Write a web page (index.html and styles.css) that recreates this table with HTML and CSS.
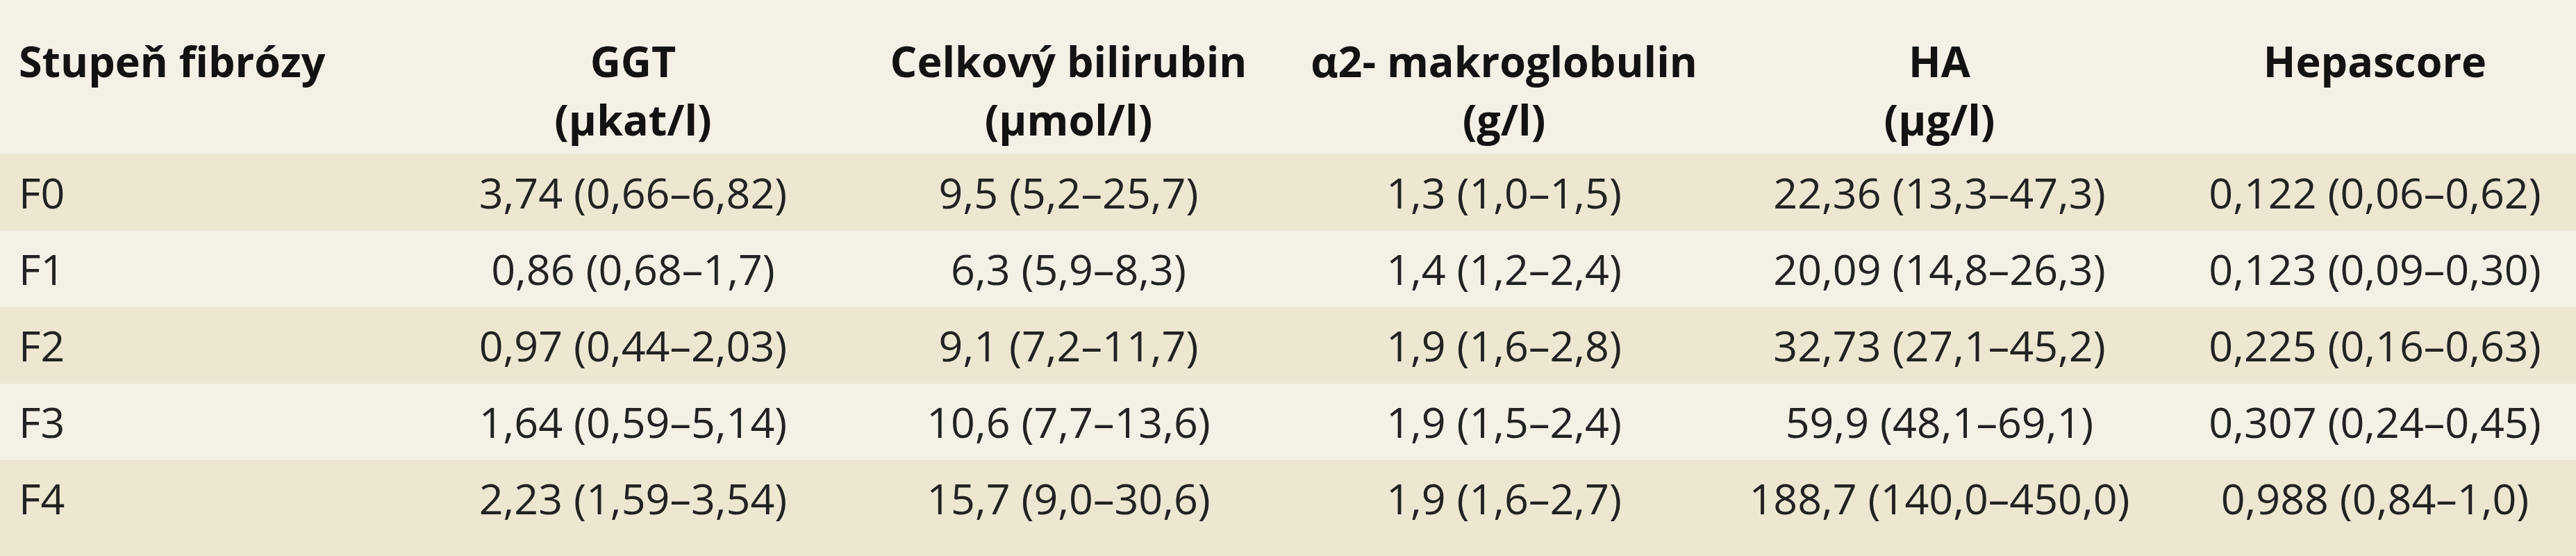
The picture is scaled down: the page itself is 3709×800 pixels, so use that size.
FILE: index.html
```html
<!DOCTYPE html>
<html lang="cs">
<head>
<meta charset="utf-8">
<title>Stupeň fibrózy</title>
<link rel="stylesheet" href="styles.css">
</head>
<body>
<div class="table">
  <div class="head">
    <div class="hc c1">Stupeň fibrózy</div>
    <div class="hc"><span>GGT</span><span>(µkat/l)</span></div>
    <div class="hc"><span>Celkový bilirubin</span><span>(µmol/l)</span></div>
    <div class="hc"><span>α2- makroglobulin</span><span>(g/l)</span></div>
    <div class="hc"><span>HA</span><span>(µg/l)</span></div>
    <div class="hc"><span>Hepascore</span></div>
  </div>
  <div class="row dark">
    <div class="c1">F0</div><div>3,74 (0,66–6,82)</div><div>9,5 (5,2–25,7)</div><div>1,3 (1,0–1,5)</div><div>22,36 (13,3–47,3)</div><div>0,122 (0,06–0,62)</div>
  </div>
  <div class="row light">
    <div class="c1">F1</div><div>0,86 (0,68–1,7)</div><div>6,3 (5,9–8,3)</div><div>1,4 (1,2–2,4)</div><div>20,09 (14,8–26,3)</div><div>0,123 (0,09–0,30)</div>
  </div>
  <div class="row dark">
    <div class="c1">F2</div><div>0,97 (0,44–2,03)</div><div>9,1 (7,2–11,7)</div><div>1,9 (1,6–2,8)</div><div>32,73 (27,1–45,2)</div><div>0,225 (0,16–0,63)</div>
  </div>
  <div class="row light">
    <div class="c1">F3</div><div>1,64 (0,59–5,14)</div><div>10,6 (7,7–13,6)</div><div>1,9 (1,5–2,4)</div><div>59,9 (48,1–69,1)</div><div>0,307 (0,24–0,45)</div>
  </div>
  <div class="row dark">
    <div class="c1">F4</div><div>2,23 (1,59–3,54)</div><div>15,7 (9,0–30,6)</div><div>1,9 (1,6–2,7)</div><div>188,7 (140,0–450,0)</div><div>0,988 (0,84–1,0)</div>
  </div>
</div>
</body>
</html>
```
FILE: styles.css
```css
html, body {
  margin: 0;
  padding: 0;
}
body {
  width: 3709px;
  height: 800px;
  background: #ede6d1;
  font-family: "Open Sans", "Noto Sans", sans-serif;
  color: #222222;
  overflow: hidden;
}
.table {
  width: 3733px;
  display: flex;
  flex-direction: column;
}
.head,
.row {
  display: grid;
  grid-template-columns: 598px repeat(5, 627px);
  font-size: 61px;
  white-space: nowrap;
}
.head {
  height: 222px;
  box-sizing: border-box;
  padding-top: 46px;
  background: #f4f0e6;
  font-weight: 700;
  line-height: 84px;
  color: #121212;
}
.hc {
  display: flex;
  flex-direction: column;
  align-items: center;
}
.head .c1 {
  align-items: flex-start;
  padding-left: 27px;
}
.row {
  height: 110px;
  align-items: center;
  text-align: center;
  line-height: 84px;
}
.row .c1 {
  text-align: left;
  padding-left: 27px;
}
.dark { background: #ede6d1; }
.light { background: #f4f0e6; }
```
